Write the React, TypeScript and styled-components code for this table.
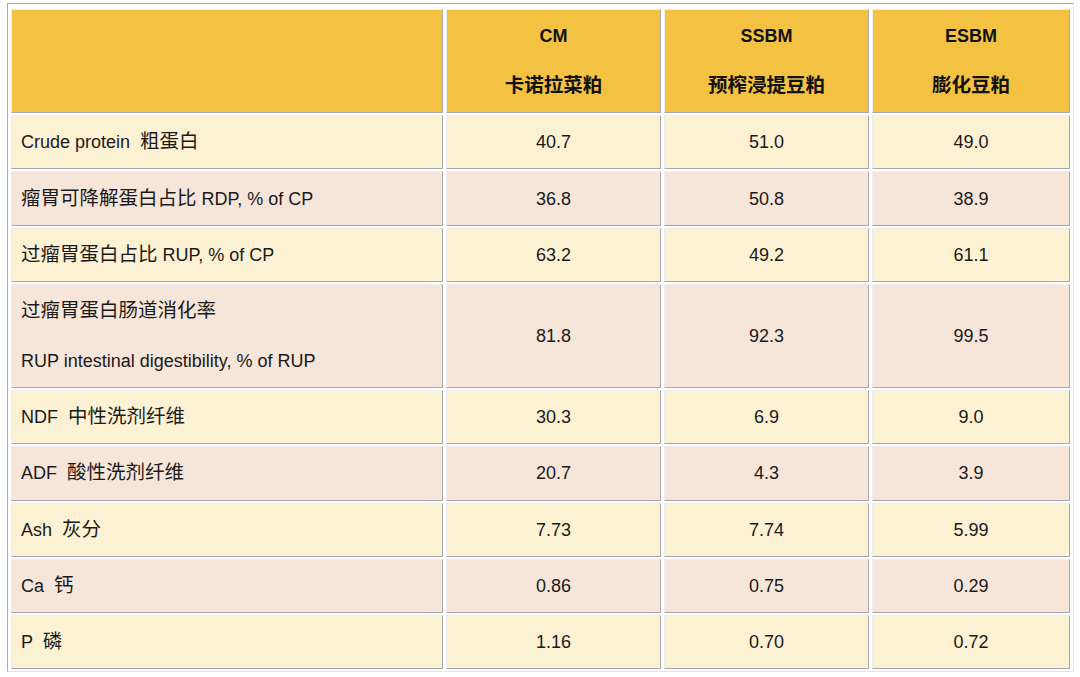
import React from "react";
import styled, { createGlobalStyle } from "styled-components";

const GlobalStyle = createGlobalStyle`
  html, body { margin: 0; padding: 0; background: #ffffff; }
  body {
    font-family: "Liberation Sans", "Noto Sans CJK SC", sans-serif;
    color: #1e1e1e;
  }
`;

const Table = styled.table`
  margin: 3px 0 0 7px;
  width: 1067px;
  box-sizing: border-box;
  table-layout: fixed;
  border-collapse: separate;
  border-spacing: 3px 2px;
  padding: 3px 0 0 0;
  border-style: solid;
  border-width: 1px;
  border-color: #a9a9a9 #e4e4e4 #e4e4e4 #a9a9a9;
  font-size: 18px;
`;

type Tone = "head" | "yellow" | "pink";

const bg: Record<Tone, string> = {
  head: "#f4c243",
  yellow: "#fcf1d3",
  pink: "#f6e5d9",
};

const Cell = styled.td<{ $tone: Tone; $first?: boolean; $w?: number }>`
  box-sizing: border-box;
  width: ${(p) => (p.$w ? `${p.$w}px` : "auto")};
  background: ${(p) => bg[p.$tone]};
  border-style: solid;
  border-width: 1px;
  border-color: #ededed #a9a9a9 #a9a9a9 #ededed;
  padding: 13.12px ${(p) => (p.$first ? "9px" : "4px")};
  text-align: ${(p) => (p.$first ? "left" : "center")};
  font-weight: ${(p) => (p.$tone === "head" ? 700 : 400)};
  color: ${(p) => (p.$tone === "head" ? "#111" : "#1a1a1a")};
  vertical-align: middle;
`;

const Lines = styled.div`
  display: flex;
  flex-direction: column;
  gap: 24px;
`;

const Line = styled.span`
  display: block;
  height: 26px;
  line-height: 26px;
  white-space: pre;
  overflow: visible;
`;

const Zh = styled.span`
  font-family: "Noto Sans CJK SC", sans-serif;
  font-size: 19.5px;
  line-height: 1;
`;

const isCJK = (c: string) => /[\u3400-\u9fff]/.test(c);

function Text({ text }: { text: string }) {
  const segs: { zh: boolean; s: string }[] = [];
  for (const ch of text) {
    const zh = isCJK(ch);
    const last = segs[segs.length - 1];
    if (last && last.zh === zh) last.s += ch;
    else segs.push({ zh, s: ch });
  }
  return (
    <>
      {segs.map((g, i) =>
        g.zh ? <Zh key={i}>{g.s}</Zh> : <React.Fragment key={i}>{g.s}</React.Fragment>
      )}
    </>
  );
}

function Content({ lines }: { lines: string[] }) {
  return (
    <Lines>
      {lines.map((l, i) => (
        <Line key={i}>
          <Text text={l} />
        </Line>
      ))}
    </Lines>
  );
}

const widths = [432, 215, 205, 198];

const header: string[][] = [
  ["\u00a0", "\u00a0"],
  ["CM", "卡诺拉菜粕"],
  ["SSBM", "预榨浸提豆粕"],
  ["ESBM", "膨化豆粕"],
];

const rows: { label: string[]; values: string[] }[] = [
  { label: ["Crude protein  粗蛋白"], values: ["40.7", "51.0", "49.0"] },
  { label: ["瘤胃可降解蛋白占比 RDP, % of CP"], values: ["36.8", "50.8", "38.9"] },
  { label: ["过瘤胃蛋白占比 RUP, % of CP"], values: ["63.2", "49.2", "61.1"] },
  {
    label: ["过瘤胃蛋白肠道消化率", "RUP intestinal digestibility, % of RUP"],
    values: ["81.8", "92.3", "99.5"],
  },
  { label: ["NDF  中性洗剂纤维"], values: ["30.3", "6.9", "9.0"] },
  { label: ["ADF  酸性洗剂纤维"], values: ["20.7", "4.3", "3.9"] },
  { label: ["Ash  灰分"], values: ["7.73", "7.74", "5.99"] },
  { label: ["Ca  钙"], values: ["0.86", "0.75", "0.29"] },
  { label: ["P  磷"], values: ["1.16", "0.70", "0.72"] },
];

export default function App() {
  return (
    <>
      <GlobalStyle />
      <Table>
        <tbody>
          <tr>
            {header.map((h, i) => (
              <Cell key={i} $tone="head" $first={i === 0} $w={widths[i]}>
                <Content lines={h} />
              </Cell>
            ))}
          </tr>
          {rows.map((r, ri) => {
            const tone: Tone = ri % 2 === 0 ? "yellow" : "pink";
            return (
              <tr key={ri}>
                <Cell $tone={tone} $first>
                  <Content lines={r.label} />
                </Cell>
                {r.values.map((v, vi) => (
                  <Cell key={vi} $tone={tone}>
                    <Content lines={[v]} />
                  </Cell>
                ))}
              </tr>
            );
          })}
        </tbody>
      </Table>
    </>
  );
}
